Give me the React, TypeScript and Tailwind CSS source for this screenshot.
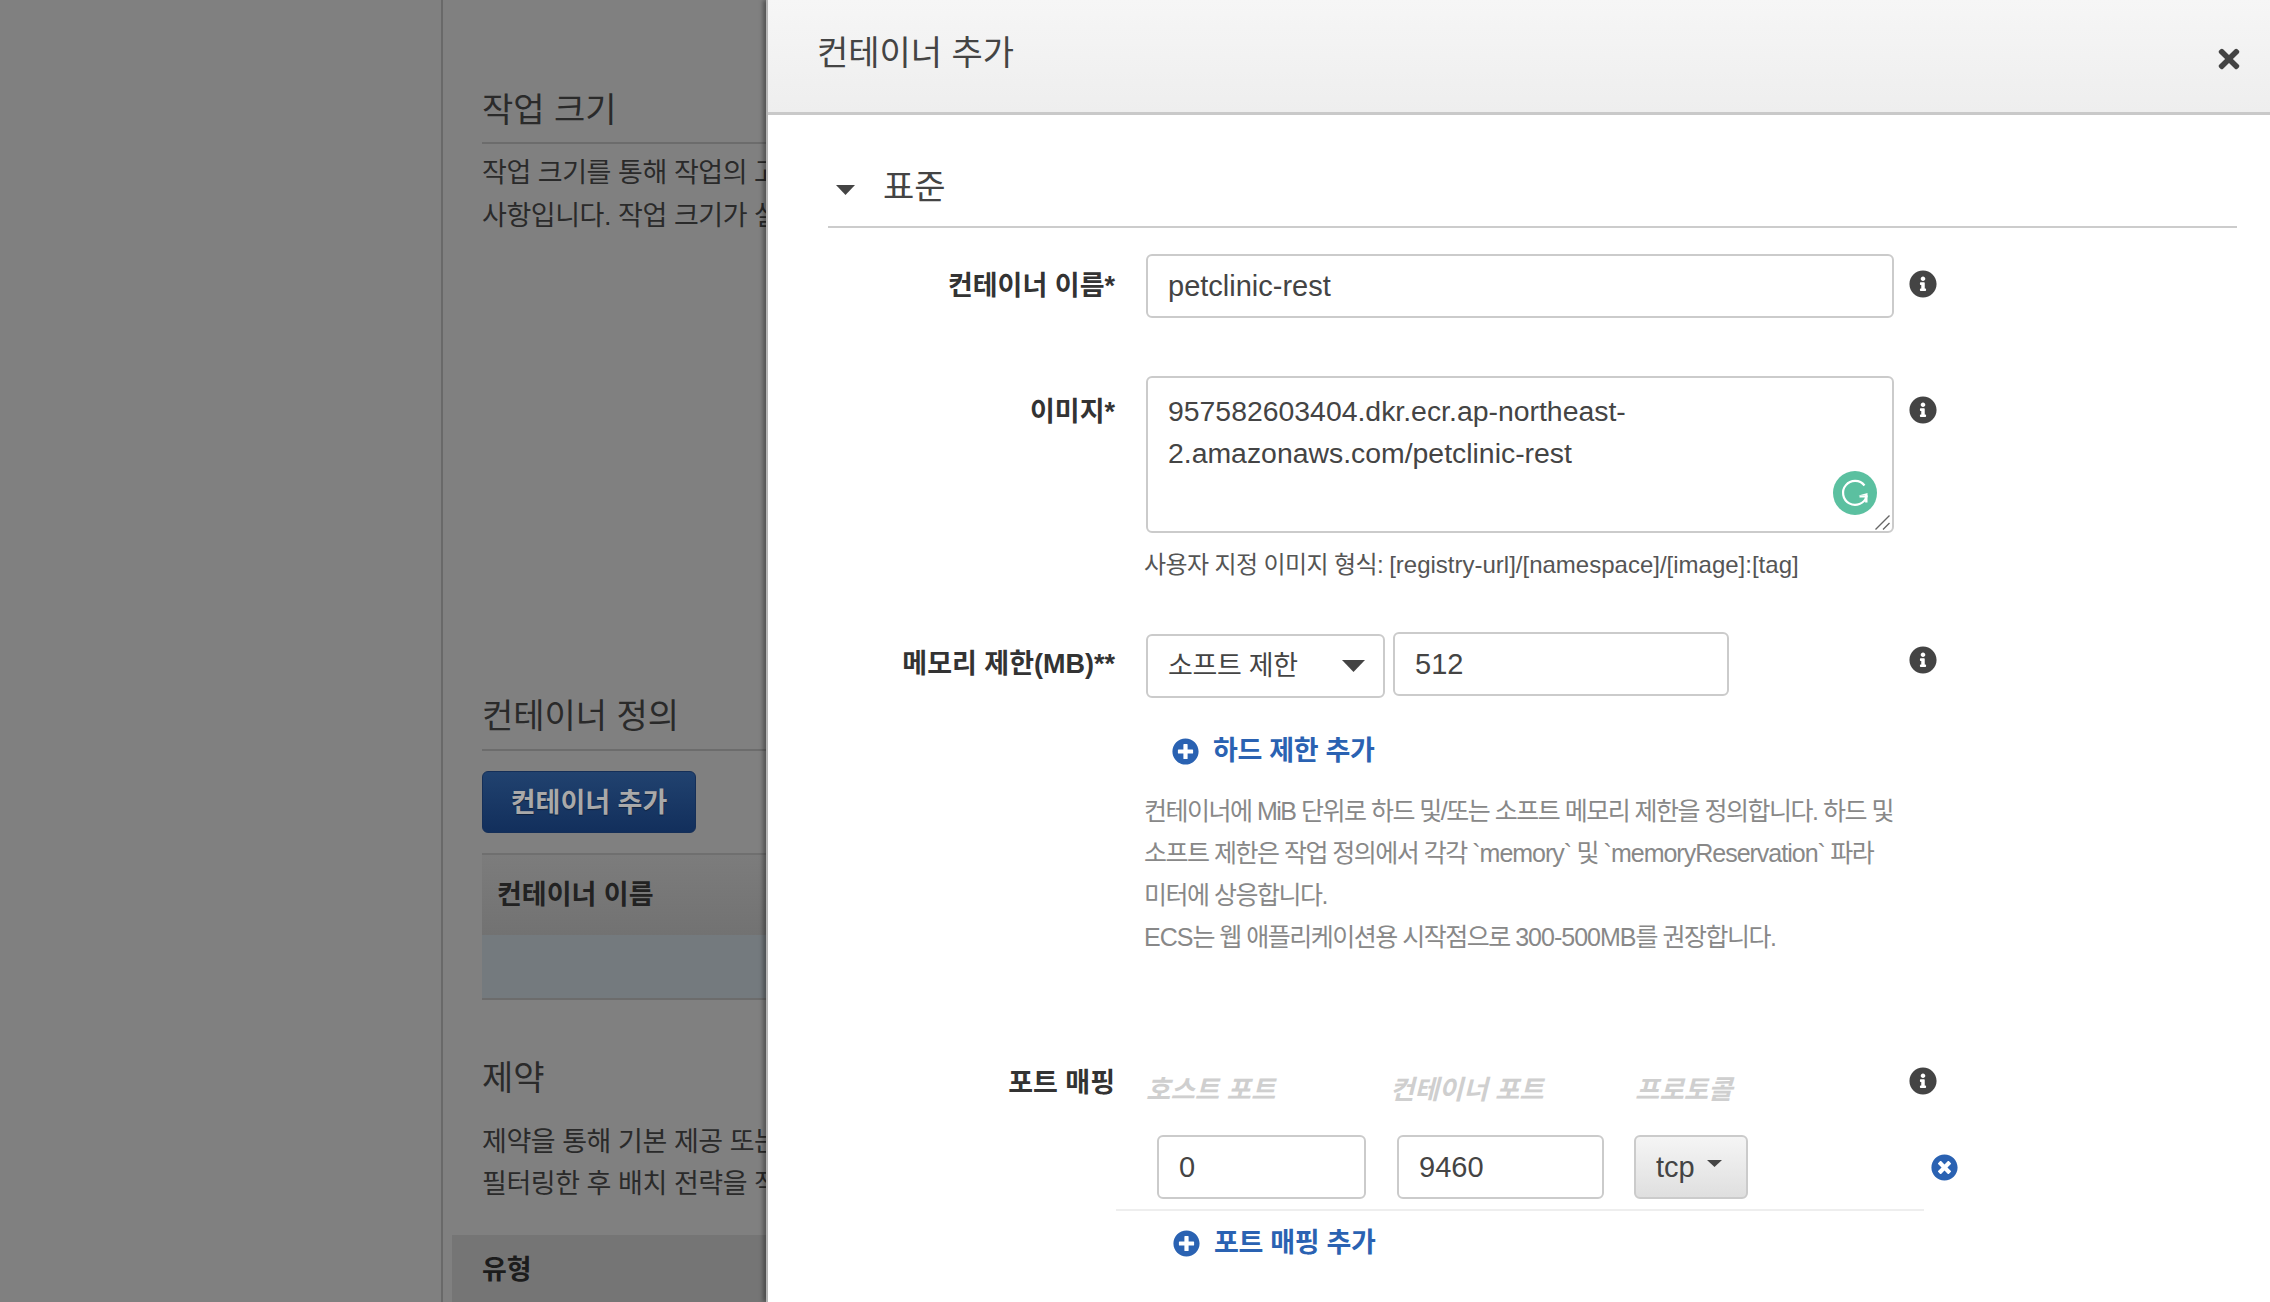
import { FaInfoCircle, FaPlusCircle, FaTimes, FaTimesCircle } from "react-icons/fa";

const font = "font-['Liberation_Sans','Noto_Sans_CJK_KR',sans-serif]";

const Info = () => <FaInfoCircle className="text-[28px] text-[#444] shrink-0" />;

const Triangle = ({ className }: { className: string }) => (
  <svg viewBox="0 0 20 12" preserveAspectRatio="none" className={className}>
    <path d="M0 0h20L10 12z" fill="#444" />
  </svg>
);

const AddLink = ({ label, className }: { label: string; className: string }) => (
  <div className={`flex items-center gap-[14px] text-[27px] font-bold tracking-[-0.3px] text-[#2a62b2] ${className}`}>
    <FaPlusCircle className="text-[27px] shrink-0" />
    <span>{label}</span>
  </div>
);

const Grammarly = () => (
  <svg viewBox="0 0 44 44" className="absolute left-[687px] top-[95px] h-[44px] w-[44px]">
    <circle cx="22" cy="22" r="22" fill="#5bc0a0" />
    <path d="M31.5 14.5A12 12 0 1 0 33.5 25.5h-7" fill="none" stroke="#fff" strokeWidth="2.2" />
    <path d="M34.5 22v9.5h-2.4v-7.1h-6.6z" fill="#fff" />
  </svg>
);

const ResizeGrip = () => (
  <svg viewBox="0 0 15 15" className="absolute left-[729px] top-[139px] h-[15px] w-[15px]">
    <path d="M0.5 14.5 14.5 0.5M8 14.5 14.5 8" stroke="#666" strokeWidth="1.4" fill="none" />
  </svg>
);

const BackgroundPage = () => (
  <div className="w-[766px] shrink-0 h-full bg-[#808080] pl-[441px] overflow-hidden">
    <div className="h-full border-l-2 border-[#696969] pl-[39px] text-[#2a2a2a] whitespace-nowrap">
      <h2 className="pt-[89px] h-[144px] text-[34px] leading-[42px] border-b-2 border-[#6c6c6c]">
        작업 크기
      </h2>
      <p className="mt-[8px] text-[27px] leading-[43px] tracking-[-0.45px]">
        작업 크기를 통해 작업의 고정 크기를 지정할 수 있습니다.
        <br />
        사항입니다. 작업 크기가 설정된 경우 컨테이너 수준입니다.
      </p>

      <h2 className="mt-[457px] text-[34px] leading-[42px] pb-[12px] border-b-2 border-[#6c6c6c]">
        컨테이너 정의
      </h2>
      <button className="mt-[20px] flex h-[62px] w-[214px] items-center justify-center rounded-[6px] border border-[#152f58] bg-gradient-to-b from-[#21426f] to-[#122f5c] pt-[2px] text-[27px] font-bold text-[#a9a9a9] [text-shadow:0_1px_1px_rgba(0,0,0,0.4)]">
        컨테이너 추가
      </button>
      <div className="mt-[20px] flex h-[82px] items-center border-t-2 border-[#6f6f6f] bg-gradient-to-b from-[#7c7c7c] to-[#727272] pl-[15px] text-[27px] font-bold text-[#222]">
        컨테이너 이름
      </div>
      <div className="h-[65px] border-b-2 border-[#6c6c6c] bg-[#747a7e]" />

      <h2 className="mt-[57px] text-[34px] leading-[42px]">제약</h2>
      <p className="mt-[22px] text-[27px] leading-[42px] tracking-[-0.45px]">
        제약을 통해 기본 제공 또는 사용자 지정 제약을 기준으로
        <br />
        필터링한 후 배치 전략을 적용할 수 있습니다.
      </p>
      <div className="mt-[30px] -ml-[30px] flex h-[70px] items-center bg-[#757575] pl-[30px] text-[27px] font-bold text-[#1c1c1c]">
        유형
      </div>
    </div>
  </div>
);

const Label = ({ children, className = "" }: { children: string; className?: string }) => (
  <div className={`w-[287px] shrink-0 text-right text-[27px] font-bold text-[#333] ${className}`}>
    {children}
  </div>
);

const inputClass =
  "h-[64px] rounded-[6px] border-2 border-[#cbcbcb] bg-white text-[29px] text-[#444] outline-none";

const AddContainerPanel = () => (
  <div className="relative flex-1 h-full overflow-hidden bg-white shadow-[-3px_0_4px_rgba(0,0,0,0.35)] border-l-2 border-[#b5b5b5]">
    <header className="flex h-[115px] items-start justify-between border-b-[3px] border-[#c9c9c9] bg-gradient-to-b from-[#f6f6f6] to-[#eeeeee] pl-[49px] pr-[26px]">
      <h1 className="pt-[30px] text-[34px] leading-[46px] text-[#444]">컨테이너 추가</h1>
      <FaTimes className="mt-[44px] text-[30px] text-[#444]" />
    </header>

    <div className="ml-[60px] mr-[33px]">
      <div className="flex h-[113px] items-center border-b-2 border-[#cccccc] pl-[8px] pt-[38px]">
        <Triangle className="h-[10px] w-[19px]" />
        <span className="ml-[28px] pb-[5px] text-[34px] text-[#444]">표준</span>
      </div>

      <div className="mt-[26px] flex">
        <Label className="pt-[12px]">컨테이너 이름*</Label>
        <input defaultValue="petclinic-rest" className={`ml-[31px] w-[748px] px-[20px] ${inputClass}`} />
        <div className="ml-[15px] pt-[16px]">
          <Info />
        </div>
      </div>

      <div className="mt-[58px] flex">
        <Label className="pt-[16px]">이미지*</Label>
        <div className="relative ml-[31px] w-[748px]">
          <textarea
            defaultValue="957582603404.dkr.ecr.ap-northeast-2.amazonaws.com/petclinic-rest"
            className="block h-[157px] w-full resize-none rounded-[6px] border-2 border-[#cbcbcb] px-[20px] py-[12px] text-[28.4px] leading-[42px] text-[#444] outline-none"
          />
          <Grammarly />
          <ResizeGrip />
          <div className="mt-[18px] -ml-[2px] text-[24px] leading-[28px] tracking-[-0.6px] text-[#555]">
            사용자 지정 이미지 형식: <span className="tracking-normal">[registry-url]/[namespace]/[image]:[tag]</span>
          </div>
        </div>
        <div className="ml-[15px] pt-[20px]">
          <Info />
        </div>
      </div>

      <div className="mt-[53px] flex">
        <Label className="pt-[12px]">메모리 제한(MB)**</Label>
        <div className="ml-[31px] w-[748px]">
          <div className="flex items-start">
            <div className="mt-[2px] flex h-[64px] w-[239px] items-center justify-between rounded-[6px] border-2 border-[#cbcbcb] pl-[20px] pr-[18px] text-[27px] tracking-[-0.3px] text-[#444]">
              소프트 제한
              <Triangle className="h-[12px] w-[23px]" />
            </div>
            <input defaultValue="512" className={`ml-[8px] w-[336px] px-[20px] ${inputClass}`} />
          </div>
          <AddLink label="하드 제한 추가" className="mt-[33px] ml-[26px]" />
          <p className="mt-[18px] -ml-[2px] whitespace-nowrap text-[25px] leading-[42px] tracking-[-1.5px] text-[#888]">
            컨테이너에 MiB 단위로 하드 및/또는 소프트 메모리 제한을 정의합니다. 하드 및
            <br />
            소프트 제한은 작업 정의에서 각각 <span className="tracking-[-1px]">`memory`</span> 및{" "}
            <span className="tracking-[-1px]">`memoryReservation`</span> 파라
            <br />
            미터에 상응합니다.
            <br />
            <span className="tracking-[-1px]">ECS</span>는 웹 애플리케이션용 시작점으로{" "}
            <span className="tracking-[-1px]">300-500MB</span>를 권장합니다.
          </p>
        </div>
        <div className="ml-[15px] pt-[14px]">
          <Info />
        </div>
      </div>

      <div className="mt-[103px] flex">
        <Label className="pt-[2px]">포트 매핑</Label>
        <div className="ml-[31px] flex w-[748px] pt-[10px] text-[26.5px] font-bold italic text-[#cfcfcf]">
          <span className="w-[244px]">호스트 포트</span>
          <span className="w-[245px]">컨테이너 포트</span>
          <span>프로토콜</span>
        </div>
        <div className="ml-[15px] pt-[6px]">
          <Info />
        </div>
      </div>

      <div className="relative mt-[25px] ml-[288px] w-[808px] border-b-2 border-[#eeeeee] pb-[10px] pl-[41px]">
        <div className="flex items-center">
          <input defaultValue="0" className={`w-[209px] px-[20px] ${inputClass}`} />
          <input defaultValue="9460" className={`ml-[31px] w-[207px] px-[20px] ${inputClass}`} />
          <div className="ml-[30px] flex h-[64px] w-[114px] items-start rounded-[6px] border-2 border-[#cbcbcb] bg-gradient-to-b from-[#f5f5f5] to-[#dfdfdf] pl-[20px] pt-[14px] text-[29px] leading-[32px] text-[#444]">
            tcp
            <Triangle className="ml-[12px] mt-[9px] h-[7px] w-[15px]" />
          </div>
          <FaTimesCircle className="absolute left-[815px] top-[19px] text-[27px] text-[#2a62b2]" />
        </div>
      </div>
      <AddLink label="포트 매핑 추가" className="mt-[12px] ml-[345px]" />
    </div>
  </div>
);

export default function App() {
  return (
    <div className={`flex h-screen w-full overflow-hidden ${font}`}>
      <BackgroundPage />
      <AddContainerPanel />
    </div>
  );
}
